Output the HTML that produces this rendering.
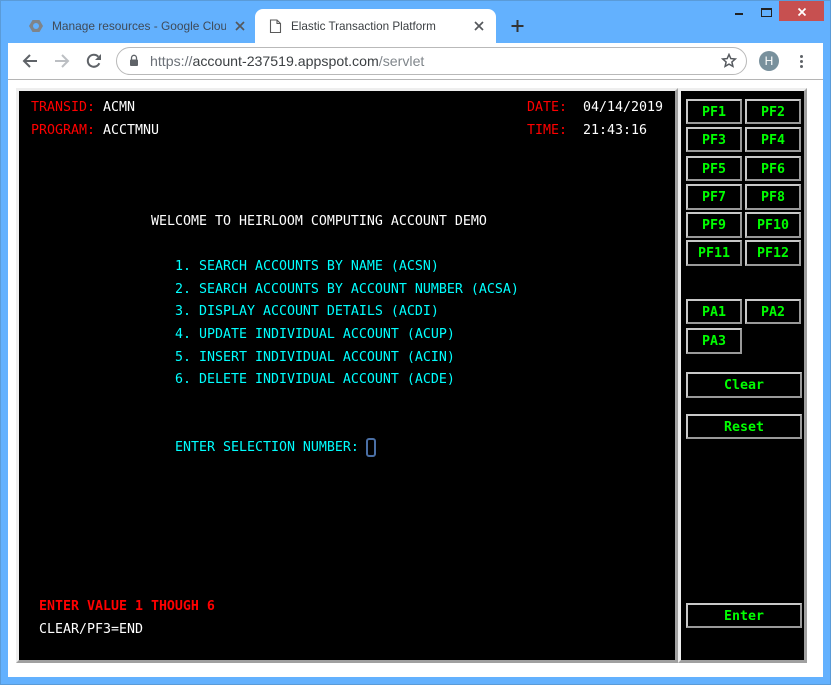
<!DOCTYPE html>
<html><head><meta charset="utf-8"><style>
html,body{margin:0;padding:0;width:831px;height:685px;overflow:hidden;background:#63b1fe}
div,span,svg{position:absolute}
#frame{left:0;top:0;width:829px;height:683px;border:1px solid #5a9bd8}
.ui{font-family:"Liberation Sans",sans-serif;white-space:nowrap}
.t{font-family:"DejaVu Sans Mono",monospace;font-size:13.29px;line-height:16px;white-space:pre;height:16px;margin-top:1px}
.r{color:#f00}.w{color:#fff}.c{color:#0ff}
.b{box-sizing:border-box;border:2px solid;border-color:#c8c8c8 #999 #999 #c8c8c8;background:#000;color:#0f0;font:bold 13.29px/24px "DejaVu Sans Mono",monospace;text-align:center}
</style></head><body>
<div id="frame"></div>
<!-- window controls -->
<div style="left:735px;top:13px;width:8px;height:2px;background:#222"></div>
<div style="left:761px;top:8px;width:9px;height:6px;border:1px solid #222;border-top-width:2px"></div>
<div style="left:779px;top:1px;width:45px;height:20px;background:#c75050"></div>
<svg style="left:797px;top:7px" width="10" height="10"><path d="M1.500 1.500L8.500 8.500M8.500 1.500L1.500 8.500" stroke="#fff" stroke-width="1.800" fill="none"/></svg>
<!-- inactive tab -->
<svg style="left:28px;top:18px" width="16" height="16" viewBox="0 0 16 16"><path d="M4.500 2h7L15 8l-3.500 6h-7L1 8z" fill="#7f8489"/><circle cx="8" cy="8" r="3" fill="#63b1fe"/></svg>
<div class="ui" style="left:52px;top:18px;width:174px;height:17px;overflow:hidden;font-size:11.9px;line-height:17px;color:#3f4a58">Manage resources - Google Cloud</div>
<svg style="left:234px;top:20px" width="12" height="12"><path d="M2 2L10 10M10 2L2 10" stroke="#55585c" stroke-width="1.700" fill="none"/></svg>
<!-- active tab -->
<div style="left:255px;top:9px;width:241px;height:34px;background:#fff;border-radius:8px 8px 0 0"></div>
<svg style="left:269px;top:19px" width="13" height="15"><path d="M1.500 1H8L11.500 4.500V13.500H1.500Z M8 1V4.500H11.500" fill="none" stroke="#5a5a5a" stroke-width="1.100"/></svg>
<div class="ui" style="left:291px;top:18px;font-size:11.7px;line-height:17px;color:#3c4043">Elastic Transaction Platform</div>
<svg style="left:473px;top:20px" width="12" height="12"><path d="M2 2L10 10M10 2L2 10" stroke="#55585c" stroke-width="1.700" fill="none"/></svg>
<svg style="left:510px;top:19px" width="14" height="14"><path d="M7.500 1V13M1.500 7H13.500" stroke="#333" stroke-width="2" fill="none"/></svg>
<!-- toolbar -->
<div style="left:8px;top:43px;width:815px;height:634px;background:#fff"></div>
<div style="left:8px;top:79px;width:815px;height:1px;background:#b5b5b5"></div>
<svg style="left:22px;top:53px" width="16" height="16"><path d="M15 8H2M8 2L2 8L8 14" fill="none" stroke="#5f6368" stroke-width="2"/></svg>
<svg style="left:54px;top:53px" width="16" height="16"><path d="M1 8H14M8 2L14 8L8 14" fill="none" stroke="#bcbfc3" stroke-width="2"/></svg>
<svg style="left:86px;top:53px" width="16" height="16" viewBox="0 0 16 16"><path d="M13.300 10.200A6 6 0 1 1 12.200 3.700" fill="none" stroke="#5f6368" stroke-width="2"/><path d="M15 1V7H9Z" fill="#5f6368"/></svg>
<div style="left:116px;top:47px;width:629px;height:26px;border:1px solid #b9b9b9;border-radius:14px;background:#fff"></div>
<svg style="left:129px;top:54px" width="10" height="13"><path d="M2.500 5.500V3.800A2.500 2.500 0 0 1 7.500 3.800V5.500" fill="none" stroke="#5f6368" stroke-width="1.300"/><rect x="1" y="5.500" width="8" height="6.500" rx="1" fill="#5f6368"/></svg>
<div class="ui" style="left:150px;top:52px;font-size:14.15px;line-height:18px;color:#3c4043"><span style="position:static;color:#6b7077">https://</span>account-237519.appspot.com<span style="position:static;color:#80868b">/servlet</span></div>
<svg style="left:721px;top:53px" width="16" height="15" viewBox="0 0 16 15"><path d="M8 1.500L9.800 5.600L14.300 6L10.900 9L11.900 13.400L8 11.100L4.100 13.400L5.100 9L1.700 6L6.200 5.600Z" fill="none" stroke="#55595e" stroke-width="1.500"/></svg>
<div class="ui" style="left:759px;top:51px;width:20px;height:20px;border-radius:50%;background:#78909c;color:#fff;font-size:12px;line-height:20px;text-align:center">H</div>
<div style="left:800px;top:55px;width:3px;height:3px;border-radius:50%;background:#5f6368"></div>
<div style="left:800px;top:60px;width:3px;height:3px;border-radius:50%;background:#5f6368"></div>
<div style="left:800px;top:65px;width:3px;height:3px;border-radius:50%;background:#5f6368"></div>
<!-- terminal -->
<div style="left:16px;top:88px;width:662px;height:575px;box-sizing:border-box;border:3px solid;border-color:#eee #a0a0a0 #a0a0a0 #eee;background:#000"></div>
<div style="left:678px;top:88px;width:129px;height:575px;box-sizing:border-box;border:3px solid;border-color:#eee #a0a0a0 #a0a0a0 #eee;background:#000"></div>
<div class="t r" style="left:31px;top:99px">TRANSID:</div>
<div class="t w" style="left:103px;top:99px">ACMN</div>
<div class="t r" style="left:31px;top:122px">PROGRAM:</div>
<div class="t w" style="left:103px;top:122px">ACCTMNU</div>
<div class="t r" style="left:527px;top:99px">DATE:</div>
<div class="t w" style="left:583px;top:99px">04/14/2019</div>
<div class="t r" style="left:527px;top:122px">TIME:</div>
<div class="t w" style="left:583px;top:122px">21:43:16</div>
<div class="t w" style="left:151px;top:213px">WELCOME TO HEIRLOOM COMPUTING ACCOUNT DEMO</div>
<div class="t c" style="left:175px;top:258px">1. SEARCH ACCOUNTS BY NAME (ACSN)</div>
<div class="t c" style="left:175px;top:281px">2. SEARCH ACCOUNTS BY ACCOUNT NUMBER (ACSA)</div>
<div class="t c" style="left:175px;top:303px">3. DISPLAY ACCOUNT DETAILS (ACDI)</div>
<div class="t c" style="left:175px;top:326px">4. UPDATE INDIVIDUAL ACCOUNT (ACUP)</div>
<div class="t c" style="left:175px;top:349px">5. INSERT INDIVIDUAL ACCOUNT (ACIN)</div>
<div class="t c" style="left:175px;top:371px">6. DELETE INDIVIDUAL ACCOUNT (ACDE)</div>
<div class="t c" style="left:175px;top:439px">ENTER SELECTION NUMBER:</div>
<div style="left:366px;top:438px;width:6px;height:15px;border:2px solid #4a6fa5;border-radius:3px"></div>
<div class="t r" style="left:39px;top:598px;font-weight:bold">ENTER VALUE 1 THOUGH 6</div>
<div class="t w" style="left:39px;top:621px">CLEAR/PF3=END</div>
<!-- buttons -->
<div class="b" style="left:686px;top:99px;width:56px;height:25px">PF1</div>
<div class="b" style="left:745px;top:99px;width:56px;height:25px">PF2</div>
<div class="b" style="left:686px;top:127px;width:56px;height:25px">PF3</div>
<div class="b" style="left:745px;top:127px;width:56px;height:25px">PF4</div>
<div class="b" style="left:686px;top:156px;width:56px;height:25px">PF5</div>
<div class="b" style="left:745px;top:156px;width:56px;height:25px">PF6</div>
<div class="b" style="left:686px;top:184px;width:56px;height:26px">PF7</div>
<div class="b" style="left:745px;top:184px;width:56px;height:26px">PF8</div>
<div class="b" style="left:686px;top:212px;width:56px;height:26px">PF9</div>
<div class="b" style="left:745px;top:212px;width:56px;height:26px">PF10</div>
<div class="b" style="left:686px;top:240px;width:56px;height:26px">PF11</div>
<div class="b" style="left:745px;top:240px;width:56px;height:26px">PF12</div>
<div class="b" style="left:686px;top:299px;width:56px;height:25px">PA1</div>
<div class="b" style="left:745px;top:299px;width:56px;height:25px">PA2</div>
<div class="b" style="left:686px;top:328px;width:56px;height:26px">PA3</div>
<div class="b" style="left:686px;top:372px;width:116px;height:26px">Clear</div>
<div class="b" style="left:686px;top:414px;width:116px;height:25px">Reset</div>
<div class="b" style="left:686px;top:603px;width:116px;height:25px">Enter</div>
</body></html>
